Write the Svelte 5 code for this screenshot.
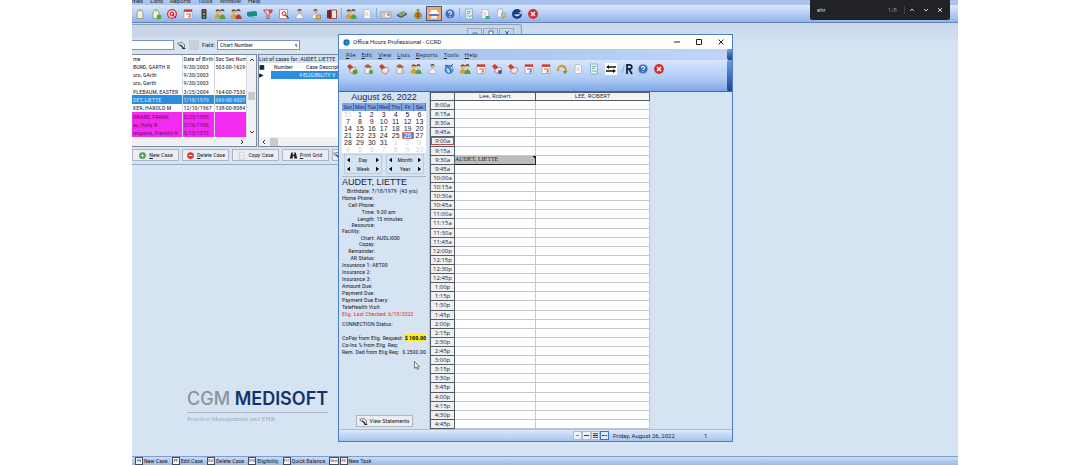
<script>
  const mainMenu = ['ities', 'Lists', 'Reports', 'Tools', 'Window', 'Help'];
  const mainTools = [
    'bottle', 'bottleGreen', 'target', 'calendar', 'traffic', 'people', 'peopleRed', 'book', 'filter', 'search', 'person', 'clerk', 'door', '|',
    'people', 'page', '|', 'card', 'cash', 'bag', 'printer', 'help', '|',
    'report', 'pageGreen', 'key', 'globe', 'close',
  ];

  const officeMenu = ['File', 'Edit', 'View', 'Lists', 'Reports', 'Tools', 'Help'];
  const officeTools = [
    'apptAdd', 'mug', 'appt', 'mugRed', 'people', '|', 'person', 'world', 'people', 'calendar', 'apptBlue', 'appt', 'calendarBlue', '|',
    'calendar', 'undo', 'page', 'report', '|', 'swap', 'rx', 'help', 'close',
  ];

  const patients = [
    { name: 'BURD, GARTH R', dob: '9/30/2003', ssn: '503-00-1629' },
    { name: 'urs, GArth', dob: '9/30/2003', ssn: '' },
    { name: 'urs, Garth', dob: '9/30/2003', ssn: '' },
    { name: 'PLEBAUM, EASTER', dob: '3/25/2004', ssn: '164-00-7530' },
    { name: 'DET, LIETTE', dob: '7/18/1979', ssn: '069-00-9007', state: 'selected' },
    { name: 'KER, HAROLD M', dob: '12/10/1967', ssn: '138-00-8084' },
    { name: 'RNARD, FRANK', dob: '5/25/1985', ssn: '', state: 'flagged' },
    { name: 'ey, Holly B', dob: '2/16/1956', ssn: '', state: 'flagged' },
    { name: 'ongame, Franklin K', dob: '5/15/1973', ssn: '', state: 'flagged' },
  ];

  const caseButtons = [
    { icon: 'add', key: 'N', text: 'ew Case' },
    { icon: 'remove', key: 'D', text: 'elete Case' },
    { icon: 'page', key: '', text: 'Copy Case' },
    { icon: 'binoculars', key: 'P', text: 'rint Grid' },
  ];

  const shortcuts = [
    { keys: ['F8'], text: 'New Case' },
    { keys: ['F9'], text: 'Edit Case' },
    { keys: ['Del'], text: 'Delete Case' },
    { keys: ['F10'], text: 'Eligibility' },
    { keys: ['F11'], text: 'Quick Balance' },
    { keys: ['Shift', 'F3'], text: 'New Task' },
  ];

  const weekdays = ['Sun', 'Mon', 'Tue', 'Wed', 'Thu', 'Fri', 'Sat'];

  // August 2022 starts on a Monday, the grid always shows six weeks
  const weeks = [0, 1, 2, 3, 4, 5].map((w) =>
    weekdays.map((_, d) => {
      const n = w * 7 + d;
      if (n === 0) return { day: 31, other: true };
      return n > 31 ? { day: n - 31, other: true } : { day: n, other: false };
    })
  );

  const details = [
    { label: 'Home Phone:', value: '' },
    { label: 'Cell Phone:', value: '', right: true },
    { label: 'Time:', value: '9:30 am', right: true },
    { label: 'Length:', value: '15 minutes', right: true },
    { label: 'Resource:', value: '', right: true, tight: true },
    { label: 'Facility:', value: '', tight: true },
    { label: 'Chart:', value: 'AUDLI000', right: true },
    { label: 'Copay:', value: '', right: true, tight: true },
    { label: 'Remainder:', value: '', right: true },
    { label: 'AR Status:', value: '', right: true },
    { label: 'Insurance 1:', value: 'AET00' },
    { label: 'Insurance 2:', value: '' },
    { label: 'Insurance 3:', value: '' },
    { label: 'Amount Due:', value: '' },
    { label: 'Payment Due:', value: '' },
    { label: 'Payment Due Every:', value: '' },
    { label: 'TeleHealth Visit:', value: '' },
  ];

  // 8:00a to 4:45p in quarter hours
  const slots = Array.from({ length: 36 }, (_, i) => {
    const hour = 8 + Math.floor(i / 4);
    const minutes = String((i % 4) * 15).padStart(2, '0');
    return `${hour > 12 ? hour - 12 : hour}:${minutes}${hour < 12 ? 'a' : 'p'}`;
  });

  let selectedDay = $state(26);
  let selectedSlot = $state('9:00a');
  let findText = $state('ehr');
</script>

{#snippet icon(name)}
  <svg class="icon" viewBox="0 0 12 12" aria-hidden="true">
    {#if name === 'bottle' || name === 'bottleGreen'}
      <path d="M4 2.5h4l1 2v6H3v-6z" fill="#f1efdd" stroke="#8f8d70" stroke-width=".8" />
      <path d="M4.5 1h3v2h-3z" fill="#b5ad85" />
      {#if name === 'bottleGreen'}<circle cx="9" cy="9" r="2.4" fill="#58a83b" />{/if}
    {:else if name === 'target'}
      <circle cx="6" cy="6" r="4.4" fill="#f6d9dc" stroke="#d23645" stroke-width="1.4" />
      <circle cx="6" cy="6" r="1.8" fill="none" stroke="#d23645" stroke-width="1.2" />
      <path d="M6 6l4 4" stroke="#a4202f" />
    {:else if name === 'calendar' || name === 'calendarBlue'}
      <path d="M2 1.5h8v9H2z" fill="#fff" stroke="#b99a9a" stroke-width=".8" />
      <path d="M2 1.5h8v2.4H2z" fill="#d33b32" />
      <path d="M4 6h4v3H6" fill="none" stroke={name === 'calendar' ? '#c06055' : '#3468c4'} stroke-width="1.2" />
    {:else if name === 'traffic'}
      <rect x="3.5" y="1" width="5" height="10" rx="1" fill="#3a423d" />
      <circle cx="6" cy="3" r="1.1" fill="#d04436" />
      <circle cx="6" cy="6" r="1.1" fill="#d8b23a" />
      <circle cx="6" cy="9" r="1.1" fill="#4fae4e" />
    {:else if name === 'people' || name === 'peopleRed'}
      <circle cx="3.8" cy="3.6" r="2.2" fill="#e2b568" />
      <path d="M1.6 3.6a2.2 2.2 0 0 1 4.4 0L4 2.5z" fill="#38240f" />
      <path d="M.6 10.5c0-6 6.4-6 6.4 0z" fill="#d8a128" />
      <circle cx="8.4" cy="3.4" r="2.1" fill="#e9c39c" />
      <path d="M6.3 3.4a2.1 2.1 0 0 1 4.2 0L8.5 2.3z" fill="#2b1c12" />
      <path d="M5.4 11c0-6 6.2-6 6.2 0z" fill={name === 'people' ? '#5b9c45' : '#b3402c'} />
    {:else if name === 'book'}
      <path d="M1 4l8-1 2 1v5l-8 1-2-2z" fill="#128e8b" />
      <path d="M1 8l2 1.4L11 8.4" fill="none" stroke="#d8f1ef" stroke-width=".8" />
    {:else if name === 'filter'}
      <path d="M1.5 2h9L7 6.5V11L5 10V6.5z" fill="#e9d3d3" stroke="#c4434a" stroke-width="1" />
      <circle cx="8.5" cy="3.5" r="1.8" fill="#d94347" />
    {:else if name === 'search'}
      <path d="M1.5 1.5h8v9h-8z" fill="#fff" stroke="#c97f83" stroke-width=".9" />
      <circle cx="6" cy="5.5" r="2" fill="#f7dcd8" stroke="#c23a3d" />
      <path d="M7.5 7l3 3.4" stroke="#444" stroke-width="1.3" />
    {:else if name === 'person' || name === 'clerk'}
      <circle cx="5.5" cy="3" r="2" fill="#d7a877" />
      <path d="M3.5 3a2 2 0 0 1 4 0L5.6 2z" fill="#55331a" />
      <path d="M2 10.6c0-6.4 7-6.4 7 0z" fill="#f4f5f9" stroke="#9aa8bf" stroke-width=".7" />
      {#if name === 'clerk'}<path d="M6 7h4.5v4H6z" fill="#e3b06e" stroke="#9a6b35" stroke-width=".6" />{/if}
    {:else if name === 'door'}
      <path d="M1 2.5l4-1v9.5l-4-1z" fill="#7f241d" />
      <path d="M5.5 2h5v8.5h-5z" fill="#efe6dd" stroke="#a24d3e" />
    {:else if name === 'page' || name === 'pageGreen'}
      <path d="M3 1.5h4.5L9.5 3.5v7H3z" fill="#f8f9fb" stroke="#aeb4c2" stroke-width=".8" />
      <path d="M4.5 5h3M4.5 7h3" stroke="#c4a9a2" stroke-width=".7" />
      {#if name === 'pageGreen'}<path d="M6.5 8h4v3h-4z" fill="#3da784" />{/if}
    {:else if name === 'card'}
      <path d="M1 4h10v6H1z" fill="#f3f1ea" stroke="#8d8c84" stroke-width=".8" />
      <path d="M2 6h4M2 8h3" stroke="#7d91ac" stroke-width=".8" />
      <circle cx="8.5" cy="6.5" r="1.5" fill="#c98a52" />
    {:else if name === 'cash'}
      <path d="M1 6l6-3 4 2-6 3.5z" fill="#8ba07a" />
      <path d="M1 6v2l4 2 6-3.2V5L5 8.5z" fill="#4d5b45" />
    {:else if name === 'bag'}
      <path d="M4.5 1h3L7 3.5c4 2 4 7.5-1 7.5s-5-5.5-1-7.5z" fill="#b98524" />
      <path d="M6 5v4.5M5 6h2M5 8.5h2" stroke="#5f3d08" stroke-width=".8" />
    {:else if name === 'printer'}
      <path d="M3 2h6v2H3z" fill="#fff" />
      <path d="M1 6c0-4 10-4 10 0z" fill="#f7fafd" />
      <path d="M1 6h10v2H1z" fill="#5a7cae" />
      <path d="M3 8h6v2.5H3z" fill="#e7eef8" />
    {:else if name === 'help'}
      <circle cx="6" cy="6" r="4.8" fill="#3b6cc0" stroke="#9db9e4" stroke-width=".8" />
      <path d="M4.5 5c0-2.2 3.2-2 3 0-.2 1-1.5 1-1.5 2M6 8.2v1" fill="none" stroke="#fff" stroke-width="1.1" />
    {:else if name === 'report'}
      <path d="M2.5 1h7v10h-7z" fill="#e3f1f6" stroke="#7fa6b8" stroke-width=".8" />
      <path d="M4 3.5h4M4 5.5h3M4 8.5l1.5-1L7 9l1.5-2" fill="none" stroke="#49a48b" stroke-width=".8" />
    {:else if name === 'key'}
      <path d="M2.5 1h5v8h-5z" fill="#eef0f5" stroke="#a4adbf" stroke-width=".8" />
      <circle cx="8.5" cy="7" r="2" fill="none" stroke="#bda452" stroke-width="1.2" />
      <path d="M8.5 9v2.5" stroke="#bda452" />
    {:else if name === 'globe'}
      <circle cx="6" cy="6" r="5" fill="#153f7d" />
      <path d="M3 6.5c1.5 3 6 2 6.5-1L7.5 5 10 3l1 3" fill="#c5dcf2" />
    {:else if name === 'close'}
      <circle cx="6" cy="6" r="4.9" fill="#d62d2a" />
      <path d="M4 4l4 4M8 4l-4 4" stroke="#fff" stroke-width="1.5" />
    {:else if name === 'appt' || name === 'apptAdd' || name === 'apptBlue'}
      <path d="M1 3l3-2 3 3v4L4 7z" fill="#cf3e26" />
      <path d="M4 6l5-2 2 3-3 4-4-2z" fill="#f6e6df" stroke="#b7614f" stroke-width=".7" />
      {#if name === 'apptAdd'}<circle cx="9" cy="9" r="2.5" fill="#4ca33b" />{/if}
      {#if name === 'apptBlue'}<circle cx="9" cy="9" r="2" fill="#435a86" />{/if}
    {:else if name === 'mug' || name === 'mugRed'}
      <path d="M2 3l4-2 4 3-4 2z" fill="#9a6a43" />
      <path d="M3 5h5.5v5.5H3z" fill="#f7f1e8" stroke="#a9998a" stroke-width=".7" />
      <circle cx="9" cy="9" r="2.2" fill={name === 'mug' ? '#58ab45' : '#b9bdc6'} />
    {:else if name === 'world'}
      <circle cx="6" cy="6.5" r="4.5" fill="#3a86c8" />
      <path d="M3 5l3 1 1 3-2 1zM7 3l3 2-1 2z" fill="#b9e0ee" />
      <path d="M2 2l3 1M10 1L8 3" stroke="#24518a" />
    {:else if name === 'undo'}
      <path d="M2 8c0-7 8-7 8 1" fill="none" stroke="#c99a35" stroke-width="2.4" />
      <path d="M6.5 8h5L9 11.5z" fill="#7a9a48" />
      <path d="M3 5l5 1" stroke="#f3dda3" />
    {:else if name === 'swap'}
      <path d="M0 0h12v12H0z" fill="#fff" />
      <path d="M3 4h8M1 8h8" stroke="#111" stroke-width="1.3" />
      <path d="M4 2v4L1 4zM8 6v4l3-2z" fill="#111" />
    {:else if name === 'rx'}
      <path d="M1 10.5L3.5 1.5M0 7h3" stroke="#9dbbe6" stroke-width="1.2" />
      <path d="M6 11V1.8h2.5c3 0 3 4.2 0 4.2H6.5M8 6l3 5" fill="none" stroke="#14223c" stroke-width="1.8" />
    {:else if name === 'add'}
      <circle cx="6" cy="6" r="4.5" fill="#3c9e47" />
      <path d="M6 3.5v5M3.5 6h5" stroke="#e9fbe9" stroke-width="1.4" />
    {:else if name === 'remove'}
      <circle cx="6" cy="6" r="4.5" fill="#d63a2b" />
      <path d="M3.5 6h5" stroke="#fff" stroke-width="1.5" />
    {:else if name === 'binoculars'}
      <path d="M3 2h2v3h2V2h2l2 8H7V7H5v3H1z" fill="#222" />
    {:else if name === 'lookup'}
      <path d="M1 3l6-1 3 3v4H7V6L3 6z" fill="#dfe4ea" stroke="#4a5058" stroke-width=".9" />
      <path d="M4 5l5 5M7 10h4" stroke="#222" stroke-width="1.4" />
    {/if}
  </svg>
{/snippet}

{#snippet toolbar(items, active)}
  {#each items as item}
    {#if item === '|'}
      <span class="separator"></span>
    {:else}
      <button class="tool" class:active={item === active} aria-label={item}>{@render icon(item)}</button>
    {/if}
  {/each}
{/snippet}

{#snippet stepper(label)}
  <div class="stepper">
    <button class="arrow" aria-label="Previous {label}"><svg viewBox="0 0 4 6"><path d="M4 0v6L0 3z" /></svg></button>
    <span>{label}</span>
    <button class="arrow" aria-label="Next {label}"><svg viewBox="0 0 4 6"><path d="M0 0v6l4-3z" /></svg></button>
  </div>
{/snippet}

<main class="screen">
  <nav class="main-menu">
    {#each mainMenu as item}<button>{item}</button>{/each}
  </nav>
  <div class="main-toolbar">{@render toolbar(mainTools, 'printer')}</div>

  <div class="workspace">
    <section class="patient-window">
      <header class="patient-title">
        <button aria-label="Minimize"><svg viewBox="0 0 8 6"><path d="M2 3h4v2H2z" /></svg></button>
        <button aria-label="Maximize"><svg viewBox="0 0 8 6"><path d="M2 1h4v4H2z" /></svg></button>
        <button aria-label="Close"><svg viewBox="0 0 8 6"><path d="M2 1l4 4M6 1L2 5" /></svg></button>
      </header>

      <div class="search-row">
        <input class="search" type="text" aria-label="Search for" />
        <button class="lookup" aria-label="Look up">{@render icon('lookup')}</button>
        <span class="blank"></span>
        <label for="field">Field:</label>
        <select id="field"><option>Chart Number</option></select>
      </div>

      <div class="grids">
        <div class="patient-grid">
          <div class="patient-rows">
            <table>
              <thead>
                <tr><th class="name">me</th><th class="dob">Date of Birth</th><th>Soc Sec Num</th></tr>
              </thead>
              <tbody>
                {#each patients as patient}
                  <tr class={patient.state}>
                    <td>{patient.name}</td><td>{patient.dob}</td><td>{patient.ssn}</td>
                  </tr>
                {/each}
              </tbody>
            </table>
            <div class="scroll-y">
              <svg viewBox="0 0 6 4"><path d="M1 3l2-2 2 2" /></svg>
              <span class="thumb"></span>
              <svg viewBox="0 0 6 4"><path d="M1 1l2 2 2-2" /></svg>
            </div>
          </div>
          <div class="scroll-x end"><svg viewBox="0 0 4 6"><path d="M1 1l2 2-2 2" /></svg></div>
        </div>

        <div class="case-grid">
          <h2>List of cases for: AUDET, LIETTE</h2>
          <table>
            <thead>
              <tr><th class="marker">■</th><th class="number">Number</th><th class="description">Case Description</th></tr>
            </thead>
            <tbody>
              <tr><td class="marker">▶</td><td class="number picked">4</td><td class="picked">ELIGIBILITY V</td></tr>
            </tbody>
          </table>
          <div class="scroll-x"><svg viewBox="0 0 4 6"><path d="M3 1L1 3l2 2" /></svg><span class="thumb"></span></div>
        </div>
      </div>

      <div class="case-buttons">
        {#each caseButtons as button}
          <button>{@render icon(button.icon)}<span><u>{button.key}</u>{button.text}</span></button>
        {/each}
        <button class="more" aria-label="View statements">{@render icon('lookup')}</button>
      </div>
    </section>

    <div class="brand">
      <h1><span>CGM</span> MEDISOFT</h1>
      <p>Practice Management and EHR</p>
    </div>
  </div>

  <footer class="shortcuts">
    {#each shortcuts as shortcut}
      <button>{#each shortcut.keys as key}<kbd>{key}</kbd>{/each}{shortcut.text}</button>
    {/each}
  </footer>

  <section class="office-window">
    <header class="office-title">
      <svg class="logo" viewBox="0 0 8 8"><circle cx="4" cy="4" r="3.6" fill="#1672b8" /><path d="M2 3l2-1 2 2-1 2" fill="#3b9bdb" /></svg>
      <span class="caption">Office Hours Professional - CCRD</span>
      <button aria-label="Minimize"><svg viewBox="0 0 8 8"><path d="M1 4h6" /></svg></button>
      <button aria-label="Maximize"><svg viewBox="0 0 8 8"><path d="M1.5 1.5h5v5h-5z" /></svg></button>
      <button aria-label="Close"><svg viewBox="0 0 8 8"><path d="M1.5 1.5l5 5M6.5 1.5l-5 5" /></svg></button>
    </header>
    <nav class="office-menu">
      {#each officeMenu as item}<button><u>{item[0]}</u>{item.slice(1)}</button>{/each}
      <span class="overflow"></span>
    </nav>
    <div class="office-toolbar">
      {@render toolbar(officeTools, '')}
      <span class="overflow"></span>
    </div>

    <div class="office-body">
      <aside>
        <h2 class="date">August 26, 2022</h2>
        <table class="month">
          <thead>
            <tr>{#each weekdays as day}<th>{day}</th>{/each}</tr>
          </thead>
          <tbody>
            {#each weeks as week}
              <tr>
                {#each week as cell}
                  <td class:other={cell.other} class:today={!cell.other && cell.day === selectedDay}>
                    <button disabled={cell.other} onclick={() => (selectedDay = cell.day)}>{cell.day}</button>
                  </td>
                {/each}
              </tr>
            {/each}
          </tbody>
        </table>

        <div class="steppers">
          <div class="group">{@render stepper('Day')}{@render stepper('Week')}</div>
          <div class="group">{@render stepper('Month')}{@render stepper('Year')}</div>
        </div>

        <div class="appointment">
          <h3>AUDET, LIETTE</h3>
          <p class="birth">Birthdate: 7/18/1979 &nbsp;(43 yrs)</p>
          {#each details as row}
            <p class:right={row.right} class:tight={row.tight}><span>{row.label}</span> {row.value}</p>
          {/each}
          <p class="alert">Elig. Last Checked: 6/18/2022</p>
          <p class="connection">CONNECTION Status:</p>
          <p class="amount"><span>CoPay from Elig. Request:</span><strong>$ 100.00</strong></p>
          <p class="amount"><span>Co-Ins % from Elig. Req:</span></p>
          <p class="amount"><span>Rem. Ded from Elig Req:</span><span>$ 2500.00</span></p>
        </div>

        <button class="statements">{@render icon('lookup')}View Statements</button>
      </aside>

      <table class="schedule">
        <thead>
          <tr><th class="time"></th><th class="first">Lee, Robert</th><th>LEE, ROBERT</th></tr>
        </thead>
        <tbody>
          {#each slots as slot}
            <tr>
              <th class="time" class:current={slot === selectedSlot}>
                <button onclick={() => (selectedSlot = slot)}>{slot}</button>
              </th>
              {#if slot === '9:30a'}
                <td class="booked"><div>AUDET, LIETTE</div></td>
              {:else}
                <td></td>
              {/if}
              <td></td>
            </tr>
          {/each}
        </tbody>
      </table>
    </div>

    <footer class="office-status">
      <div class="views">
        <button aria-label="Day view"><svg viewBox="0 0 8 8"><path d="M3 4h2" /></svg></button>
        <button aria-label="Week view"><svg viewBox="0 0 8 8"><path d="M1 4h6" /></svg></button>
        <button aria-label="Month view"><svg viewBox="0 0 8 8"><path d="M1 2h6M1 4h6M1 6h6" /></svg></button>
        <button class="on" aria-label="Multi view"><svg viewBox="0 0 8 8"><path d="M1 4h3M5 4h2" /></svg></button>
      </div>
      <span class="status-date">Friday, August 26, 2022</span>
      <span class="status-count">1</span>
    </footer>
  </section>

  <svg class="pointer" viewBox="0 0 6 9"><path d="M.5.5v7l1.7-1.5L3.5 8.5l1-.5-1-2.3h2z" fill="#fff" stroke="#445" stroke-width=".7" /></svg>

  <div class="find-bar">
    <input type="text" aria-label="Find in page" bind:value={findText} />
    <span class="count">1/8</span>
    <button aria-label="Previous match"><svg viewBox="0 0 8 8"><path d="M2 5l2-2 2 2" /></svg></button>
    <button aria-label="Next match"><svg viewBox="0 0 8 8"><path d="M2 3l2 2 2-2" /></svg></button>
    <button aria-label="Close"><svg viewBox="0 0 8 8"><path d="M2 2l4 4M6 2L2 6" /></svg></button>
  </div>
</main>

<style>
  :global(body) {
    background: #fff;
  }

  .screen {
    --ui: 'Roboto Condensed', Lato, sans-serif;
    --tahoma: 'Open Sans', sans-serif;
    position: relative;
    display: flex;
    flex-direction: column;
    min-height: 100vh;
    margin: 0 131px 0 132px;
    overflow: hidden;
    background: #d5e3f3;
    color: #1c2430;
    font-family: var(--ui);
    font-size: 6px;
    line-height: 8px;
  }

  button,
  input,
  select {
    margin: 0;
    padding: 0;
    border: 0;
    background: none;
    color: inherit;
    font: inherit;
    white-space: nowrap;
  }

  h1, h2, h3, p {
    margin: 0;
    font-size: inherit;
    font-weight: normal;
  }

  table {
    border-collapse: collapse;
    table-layout: fixed;
  }

  th, td {
    padding: 0;
    box-sizing: border-box;
    font-weight: normal;
    text-align: left;
    white-space: nowrap;
    overflow: hidden;
  }

  svg {
    display: block;
    flex: none;
  }

  .icon {
    width: 12px;
    height: 12px;
  }

  /* Main menu and toolbar */
  .main-menu {
    display: flex;
    align-items: flex-end;
    gap: 7px;
    height: 5px;
    overflow: hidden;
    background: #a9c5ee;
    font-family: Roboto, sans-serif;
  }

  .main-toolbar {
    display: flex;
    align-items: center;
    height: 17px;
    background: linear-gradient(#dbe8fb, #b5cff5 50%, #8fb3e8);
    border-bottom: 1px solid #6684b4;
  }

  .tool {
    display: flex;
    align-items: center;
    justify-content: center;
    width: 16px;
    height: 15px;
    box-sizing: border-box;
  }

  .tool.active {
    border: 1px solid #4a5a86;
    background: #f3a565;
  }

  .separator {
    width: 1px;
    height: 11px;
    margin: 0 1px;
    background: #8fabd6;
  }

  .workspace {
    display: flex;
    flex: 1;
    flex-direction: column;
    align-items: flex-start;
    background: linear-gradient(#c6d5e8, #d5e3f3 20px);
  }

  /* Patient list window */
  .patient-window {
    width: 390px;
    border-bottom: 1px solid #8fa9cc;
  }

  .patient-title {
    display: flex;
    justify-content: flex-end;
    gap: 1px;
    margin-top: 1px;
    padding: 3px 7px 0 0;
    border: 1px solid #8a9cb8;
    border-width: 1px 1px 0 0;
    border-radius: 0 3px 0 0;
    background: #c8d5e6;
  }

  .patient-title button {
    width: 15px;
    height: 9px;
    border: 1px solid #9dabc0;
    box-sizing: border-box;
  }

  .patient-title svg {
    width: 8px;
    height: 6px;
    margin: 0 auto;
    fill: #fff;
    stroke: #56657c;
    stroke-width: 1;
  }

  .search-row {
    display: flex;
    align-items: center;
    height: 12px;
    padding: 2px 0 3px;
  }

  .search {
    width: 42px;
    height: 10px;
    border: 1px solid #8194ad;
    border-left: 0;
    background: #fff;
    box-sizing: border-box;
  }

  .lookup {
    margin-left: 3px;
  }

  .lookup .icon {
    width: 9px;
    height: 9px;
  }

  .blank {
    width: 10px;
    height: 10px;
    margin: 0 3px;
    background: #c9cfda;
  }

  .search-row select {
    appearance: none;
    width: 83px;
    height: 10px;
    margin-left: 2px;
    padding-left: 2px;
    border: 1px solid #8194ad;
    background: linear-gradient(45deg, transparent 50%, #888 50%) right 2px center / 3px 3px no-repeat, #fff;
    box-sizing: border-box;
    line-height: 8px;
  }

  .grids {
    display: flex;
    gap: 1px;
    height: 93px;
  }

  .patient-grid {
    display: flex;
    flex-direction: column;
    width: 125px;
    border: 1px solid #7c8aa0;
    border-left: 0;
    background: #fff;
    box-sizing: border-box;
  }

  .patient-rows {
    display: flex;
    flex: 1;
  }

  .patient-grid table {
    width: 115px;
    height: 82px;
  }

  .patient-grid .name {
    width: 50px;
  }

  .patient-grid .dob {
    width: 32px;
  }

  .patient-grid td,
  .patient-grid th {
    padding-left: 1px;
    border: 1px solid #d4d9e0;
    border-width: 0 1px 0 0;
    line-height: 7px;
  }

  .patient-grid .selected {
    background: #2a8ee0;
    color: #d5e8fb;
  }

  .patient-grid .flagged {
    background: #f32af0;
    color: #6a1668;
  }

  .scroll-y {
    display: flex;
    flex: 1;
    flex-direction: column;
    align-items: center;
    justify-content: space-between;
    padding: 3px 0;
    background: #f0f1f3;
  }

  .scroll-y svg {
    width: 6px;
    height: 4px;
  }

  .scroll-y .thumb {
    width: 7px;
    height: 8px;
    background: #c8cacd;
  }

  .scroll-y svg,
  .scroll-x svg {
    fill: none;
    stroke: #333;
    stroke-width: 1;
  }

  .scroll-x {
    display: flex;
    align-items: center;
    gap: 4px;
    height: 9px;
    padding: 0 3px;
    background: #f0f1f3;
  }

  .scroll-x.end {
    justify-content: flex-end;
    padding-right: 12px;
  }

  .scroll-x svg {
    width: 4px;
    height: 6px;
  }

  .scroll-x .thumb {
    width: 8px;
    height: 8px;
    background: #c8cacd;
  }

  .case-grid {
    display: flex;
    flex: 1;
    flex-direction: column;
    border: 1px solid #7c8aa0;
    background: #fff;
  }

  .case-grid h2 {
    background: #d5e3f3;
  }

  .case-grid table {
    width: 100%;
    margin-bottom: auto;
  }

  .case-grid .marker {
    width: 12px;
    font-family: 'DejaVu Sans', sans-serif;
    text-align: left;
  }

  .case-grid th.number {
    width: 32px;
    padding-left: 3px;
  }

  .case-grid td.number {
    padding-right: 1px;
    text-align: right;
  }

  .case-grid .description {
    padding-left: 3px;
  }

  .case-grid .picked {
    background: #2a8ee0;
    color: #e4f0fc;
  }

  .case-buttons {
    display: flex;
    gap: 3px;
    padding: 2px 0 3px;
  }

  .case-buttons button,
  .statements {
    display: flex;
    align-items: center;
    justify-content: center;
    gap: 2px;
    height: 12px;
    border: 1px solid #aeb6c1;
    background: #ebedf0;
    box-sizing: border-box;
  }

  .case-buttons button {
    width: 47px;
  }

  .case-buttons .more {
    justify-content: flex-start;
  }

  .case-buttons .icon,
  .statements .icon {
    width: 9px;
    height: 9px;
  }

  .brand {
    margin: auto 0 33px 55px;
  }

  .brand h1 {
    padding-bottom: 3px;
    border-bottom: 1px solid #aab6c6;
    color: #15336b;
    font-family: Inter, sans-serif;
    font-size: 18px;
    font-weight: 600;
    line-height: 21px;
  }

  .brand h1 span {
    color: #8c939d;
    font-weight: 500;
  }

  .brand p {
    padding-top: 2px;
    color: #a1abba;
    font-family: 'Liberation Serif', serif;
    font-size: 7px;
  }

  .shortcuts {
    display: flex;
    gap: 4px;
    height: 9px;
    padding-left: 3px;
    border-top: 1px solid #7f9ccb;
    background: linear-gradient(#c9dcf6, #9bbbe8);
    box-sizing: border-box;
  }

  .shortcuts button {
    display: flex;
    align-items: center;
    gap: 1px;
  }

  kbd {
    min-width: 8px;
    height: 8px;
    border: 1px solid #444c58;
    background: #f4f6f8;
    box-sizing: border-box;
    font-family: var(--ui);
    font-size: 4px;
    line-height: 6px;
    text-align: center;
  }

  /* Office Hours window, floats over the workspace */
  .office-window {
    position: absolute;
    top: 34px;
    left: 206px;
    width: 395px;
    border: 1px solid #4a7fc4;
    background: #d5e3f3;
    box-sizing: border-box;
  }

  .office-title {
    display: flex;
    align-items: center;
    height: 14px;
    padding: 0 7px 0 4px;
    background: #fff;
    font-family: Roboto, sans-serif;
  }

  .logo {
    width: 7px;
    height: 7px;
    margin-right: 3px;
  }

  .caption {
    flex: 1;
  }

  .office-title button {
    width: 8px;
    height: 8px;
    margin-left: 14px;
  }

  .office-title button svg {
    width: 8px;
    height: 8px;
    fill: none;
    stroke: #222;
    stroke-width: 1;
  }

  .office-menu {
    display: flex;
    align-items: center;
    gap: 6px;
    height: 11px;
    padding-left: 7px;
    background: linear-gradient(90deg, #9dbdec, #bfd6f8);
    font-family: var(--tahoma);
  }

  .office-toolbar {
    display: flex;
    height: 31px;
    padding-left: 5px;
    border-bottom: 1px solid #3d66b0;
    background: linear-gradient(#d7e6fc, #aecbf5 60%, #7fa8e6);
  }

  .office-toolbar .tool {
    height: 17px;
  }

  .office-toolbar .separator {
    margin: 0;
    background: none;
  }

  .overflow {
    align-self: stretch;
    width: 5px;
    margin-left: auto;
    border-radius: 2px 0 0 2px;
    background: linear-gradient(#6f9be2, #1d4596);
  }

  .office-body {
    display: flex;
  }

  aside {
    display: flex;
    flex-direction: column;
    width: 91px;
    padding: 0 3px 2px;
    border-right: 1px solid #b4c5da;
    box-sizing: border-box;
  }

  .date {
    color: #14265e;
    font-family: 'Liberation Sans', sans-serif;
    font-size: 9px;
    line-height: 11px;
    text-align: center;
  }

  .month {
    width: 100%;
    background: #fff;
    font-family: 'Liberation Sans', sans-serif;
  }

  .month th {
    border: 1px solid #4e74bb;
    border-width: 0 1px 0 0;
    background: #7fa3e0;
    color: #14265e;
    font-size: 5px;
    text-align: center;
  }

  .month td {
    height: 7px;
    font-size: 7px;
    line-height: 7px;
    text-align: center;
  }

  .month button {
    display: block;
    width: 100%;
    line-height: 7px;
  }

  .month .other {
    color: #d3d6da;
  }

  .month .today {
    background: #3d86e0;
    color: #fff;
    outline: 1px solid #d07a80;
    outline-offset: -1px;
  }

  .steppers {
    display: flex;
    gap: 4px;
    padding: 1px 2px 2px;
    border-bottom: 1px solid #a5b8d0;
  }

  .group {
    flex: 1;
    padding: 0 2px;
    border: 1px solid #bccce0;
  }

  .stepper {
    display: flex;
    align-items: center;
    justify-content: space-between;
    height: 9px;
  }

  .arrow svg {
    width: 3px;
    height: 6px;
  }

  .appointment {
    line-height: 7px;
    white-space: nowrap;
  }

  .appointment h3 {
    font-family: 'Liberation Sans', sans-serif;
    font-size: 9px;
    line-height: 10px;
  }

  .appointment .birth {
    padding-left: 5px;
  }

  .appointment .right span {
    display: inline-block;
    width: 33px;
    text-align: right;
  }

  .appointment .tight {
    line-height: 6px;
  }

  .appointment .alert {
    color: #e0373c;
  }

  .appointment .connection {
    padding: 3px 0 7px;
  }

  .appointment .amount {
    display: flex;
    justify-content: space-between;
  }

  .appointment strong {
    background: #ffee1f;
    color: #111;
  }

  .statements {
    align-self: center;
    width: 57px;
    margin-top: auto;
  }

  .schedule {
    width: 220px;
    height: 337px;
    background: #fff;
  }

  .schedule .time {
    width: 24px;
    background: #eef0f3;
    border-color: #555c66;
    text-align: center;
  }

  .schedule th,
  .schedule td {
    border: 1px solid #c4c8ce;
    font-family: var(--tahoma);
    line-height: 7px;
  }

  .schedule thead th {
    height: 8px;
    background: #f3f4f6;
    border-color: #555c66;
    text-align: center;
  }

  .schedule .first {
    width: 81px;
  }

  .schedule button {
    display: block;
    width: 100%;
    line-height: 8px;
  }

  .schedule .current button {
    outline: 1px solid #c0504d;
    outline-offset: -1px;
  }

  .schedule .booked {
    border-color: #222;
    background: #bdbdbd;
    font-family: 'Liberation Serif', serif;
  }

  .booked div {
    background: linear-gradient(45deg, transparent 50%, #111 50%) right top / 3px 3px no-repeat;
  }

  .office-status {
    display: flex;
    align-items: center;
    height: 11px;
    border-top: 1px solid #a9bedb;
    background: linear-gradient(#dce9fa, #a8c4ec);
    font-family: Roboto, sans-serif;
  }

  .views {
    display: flex;
    margin-left: 234px;
  }

  .views button {
    width: 9px;
    height: 9px;
    border: 1px solid #b3bdcb;
    background: #eef1f5;
    box-sizing: border-box;
  }

  .views .on {
    border-color: #3c78c8;
    background: #dcebff;
  }

  .views svg {
    width: 7px;
    height: 7px;
    stroke: #222;
    stroke-width: 1;
  }

  .status-date {
    width: 89px;
    padding-left: 4px;
  }

  .status-count {
    padding-left: 2px;
  }

  .pointer {
    position: absolute;
    top: 361px;
    left: 282px;
    width: 6px;
    height: 9px;
  }

  /* Browser find bar */
  .find-bar {
    position: absolute;
    top: 0;
    right: 8px;
    display: flex;
    align-items: center;
    width: 140px;
    height: 20px;
    padding: 0 3px 0 7px;
    border-radius: 0 0 2px 2px;
    background: #202226;
    box-sizing: border-box;
    color: #d5d7da;
    font-family: Roboto, sans-serif;
  }

  .find-bar input {
    flex: 1;
    min-width: 0;
  }

  .find-bar .count {
    padding-right: 7px;
    border-right: 1px solid #3c3f44;
    color: #85888d;
  }

  .find-bar button {
    width: 8px;
    margin: 0 3px;
  }

  .find-bar svg {
    width: 8px;
    height: 8px;
    fill: none;
    stroke: #c8cacd;
    stroke-width: 1;
  }
</style>
